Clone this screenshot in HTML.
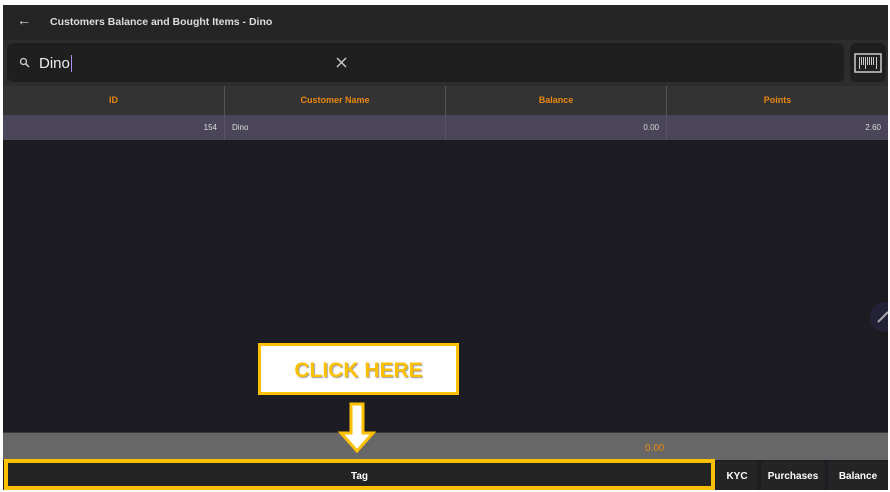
<!DOCTYPE html><html><head><style>
*{margin:0;padding:0;box-sizing:border-box}
body{width:890px;height:492px;background:#fff;font-family:"Liberation Sans",sans-serif;position:relative;overflow:hidden}
.app{position:absolute;left:3px;top:5px;width:885px;height:485px;background:#1e1c23;overflow:hidden}
.hdr{position:absolute;left:0;top:0;width:885px;height:35px;background:#252525;color:#ddd;font-size:10.5px;font-weight:bold}
.sa{position:absolute;left:0;top:35px;width:885px;height:46px;background:#2d2d2d}
.sb{position:absolute;left:4px;top:38px;width:837px;height:39px;background:#1f1f1f;border-radius:6px}
.bc{position:absolute;left:847px;top:38px;width:36px;height:39px;background:#1f1f1f;border-radius:6px}
.th{position:absolute;top:81px;height:29px;background:#333;color:#e8870f;font-size:9px;font-weight:bold;text-align:center;line-height:29px;border-right:1px solid #555}
.td{position:absolute;top:110px;height:25px;background:#4a4558;color:#ddd;font-size:8px;line-height:25px;border-right:1px solid #5a5566;padding:0 7px}
.btn{position:absolute;top:456px;height:29px;background:#242424;color:#fff;font-size:10px;font-weight:bold;text-align:center;line-height:31px;border-radius:3px}
</style></head><body>
<div class="app">
<div class="hdr"><span style="position:absolute;left:14px;top:7px;font-size:14px;font-weight:normal">←</span><span style="position:absolute;left:47px;top:11px">Customers Balance and Bought Items - Dino</span></div>
<div class="sa"></div>
<div class="sb">
<svg style="position:absolute;left:12px;top:14px" width="11" height="11" viewBox="0 0 11 11"><circle cx="4.5" cy="4.5" r="3" stroke="#ccc" stroke-width="1.3" fill="none"/><path d="M6.8 6.8L10 10" stroke="#ccc" stroke-width="1.5"/></svg>
<span style="position:absolute;left:32px;top:12px;color:#eee;font-size:15px">Dino<span style="border-left:1px solid #a98cf0;margin-left:1px"></span></span>
<svg style="position:absolute;left:329px;top:14px" width="11" height="11"><path d="M1 1L10 10M10 1L1 10" stroke="#ccc" stroke-width="1.4"/></svg>
</div>
<div class="bc"><svg style="position:absolute;left:4px;top:10px" width="28" height="20"><rect x="1" y="1" width="26" height="18" fill="none" stroke="#ccc" stroke-width="1.5"/><path d="M5.5 4v12M7.5 4v8M9.5 4v8M11.5 4v12M13.5 4v8M15.5 4v8M17.5 4v8M19.5 4v8M22.5 4v12" stroke="#ccc" stroke-width="1"/></svg></div>
<div class="th" style="left:0;width:222px">ID</div>
<div class="th" style="left:222px;width:221px">Customer Name</div>
<div class="th" style="left:443px;width:221px">Balance</div>
<div class="th" style="left:664px;width:221px;border:none">Points</div>
<div class="td" style="left:0;width:222px;text-align:right">154</div>
<div class="td" style="left:222px;width:221px">Dino</div>
<div class="td" style="left:443px;width:221px;text-align:right">0.00</div>
<div class="td" style="left:664px;width:221px;text-align:right;border:none">2.60</div>
<div style="position:absolute;left:867px;top:297px;width:30px;height:30px;border-radius:50%;background:#232236"></div>
<svg style="position:absolute;left:874px;top:306px" width="12" height="12"><path d="M1 11L11 1" stroke="#aaa" stroke-width="2"/></svg>
<div style="position:absolute;left:0;top:427px;width:885px;height:28px;background:#676767;border-top:1px solid #3a3a3a"><span style="position:absolute;left:642px;top:10px;color:#e8870f;font-size:10px">0.00</span></div>
<div class="btn" style="left:713px;width:42px">KYC</div>
<div class="btn" style="left:758px;width:64px">Purchases</div>
<div class="btn" style="left:825px;width:60px">Balance</div>
</div>
<div style="position:absolute;left:4px;top:459px;width:711px;height:31px;border:4px solid #ffc000;background:#242424;color:#fff;font-size:10px;font-weight:bold;text-align:center;line-height:27px">Tag</div>
<div style="position:absolute;left:258px;top:343px;width:201px;height:52px;border:3px solid #ffc000;background:#fff;color:#ffc000;font-size:21px;font-weight:bold;text-align:center;line-height:50px;text-shadow:1px 1px 1px #999">CLICK HERE</div>
<svg style="position:absolute;left:336px;top:402px" width="44" height="52"><path d="M15 2h12v29h10L21 49 5 31h10z" fill="#fff" stroke="#ffc000" stroke-width="3"/></svg>
</body></html>
